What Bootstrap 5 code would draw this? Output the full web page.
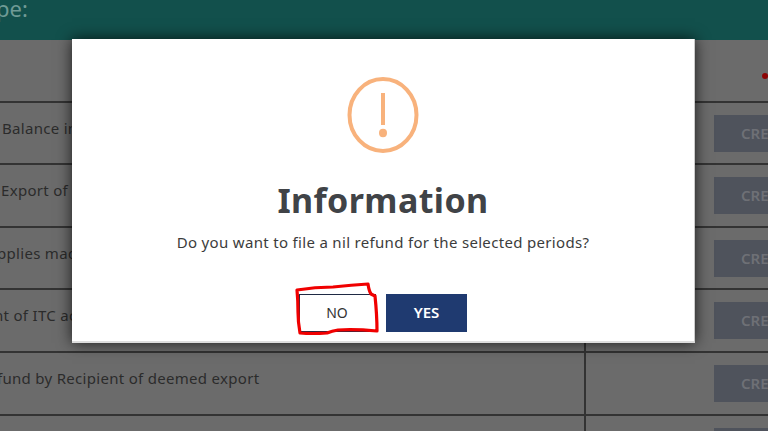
<!DOCTYPE html>
<html lang="en">
<head>
  <meta charset="UTF-8">
  <meta name="viewport" content="width=device-width, initial-scale=1">
  <title>Nil refund</title>
  <link href="https://cdn.jsdelivr.net/npm/bootstrap@5.3.0/dist/css/bootstrap.min.css" rel="stylesheet">
  <style>
    html, body { height: 432px; overflow: hidden; background: #fff; }
    body { font-family: "Noto Sans", "DejaVu Sans", sans-serif; color: #333; }
    /* page behind the dialog, already in its dimmed colours */
    .page-wrap { height: 431px; overflow: hidden; background: #6b6b6b; }
    .top-band { height: 40px; background: #12504c; color: #6f9a95; font-size: 22px; line-height: 17px; overflow: hidden; white-space: nowrap; }
    .type-row { height: 62.6px; border-bottom: 2px solid #333; }
    .type-name { width: 584px; flex: none; font-size: 15px; letter-spacing: .3px; line-height: 20px; padding: 15px 0 0 2px; overflow: hidden; white-space: nowrap; color: #2b2b2b; }
    .type-action { flex: 1; border-left: 2px solid #333; padding: 12px 0 0 128px; overflow: hidden; white-space: nowrap; }
    .head-action { border-left: 0; padding: 0; text-align: right; }
    .req-dot { display: inline-block; width: 6px; height: 6px; border-radius: 50%; background: #8c0505; margin-top: 33px; vertical-align: top; }
    .create-text { display: block; width: 110px; height: 37px; line-height: 37px; background: #4f535c; color: #6e7076; font-size: 15px; font-weight: 600; padding-left: 27px; }
    .shift-a { margin-left: -1px; }
    .shift-b { margin-left: -5px; }
    .shift-d { margin-left: -8px; }
    .shift-c { margin-left: -27px; }
    .info-dialog { position: absolute; left: 72px; top: 39px; width: 623px; height: 304px; background: #fff; box-shadow: 0 0 14px rgba(0, 0, 0, .75); border-right: 1px solid #ccc; border-bottom: 2px solid #ddd; }
    .info-icon { margin-top: 37px; width: 72px; height: 78px; flex: none; }
    .info-title { font-size: 34px; font-weight: 700; color: #404347; margin: 24px 0 0; line-height: 44px; letter-spacing: .4px; }
    .info-text { font-size: 15px; color: #3c3c3c; margin: 11px 0 0; line-height: 18px; letter-spacing: .32px; }
    .info-actions { margin-top: 43px; gap: 10px; }
    .btn-no, .btn-yes { height: 38px; border-radius: 0; padding: 0 0 2px; }
    .btn-no { width: 77px; font-size: 14px; padding-right: 2px; background: #fff; color: #333; border: 0; border-top: 1px solid #1f2a44; border-left: 1px solid #1f2a44; border-bottom: 1px solid #1f2a44; }
    .btn-yes { width: 81px; font-size: 15px; background: #1f3a70; color: #fff; border: 1px solid #1f3a70; font-weight: 600; }
    .scribble { position: absolute; left: 0; top: 0; pointer-events: none; }
  </style>
</head>
<body>
  <div class="page-wrap">
    <div class="top-band"><span class="d-inline-block shift-c">Type:</span></div>
    <div class="type-row d-flex">
      <div class="type-name"></div>
      <div class="type-action head-action"><span class="req-dot"></span></div>
    </div>
    <div class="type-row d-flex">
      <div class="type-name">Balance in Electronic Cash Ledger</div>
      <div class="type-action"><span class="create-text">CREATE</span></div>
    </div>
    <div class="type-row d-flex">
      <div class="type-name"><span class="shift-a d-inline-block">Export of Services with Payment of Tax</span></div>
      <div class="type-action"><span class="create-text">CREATE</span></div>
    </div>
    <div class="type-row d-flex">
      <div class="type-name"><span class="shift-b d-inline-block">pplies made to SEZ Unit</span></div>
      <div class="type-action"><span class="create-text">CREATE</span></div>
    </div>
    <div class="type-row d-flex">
      <div class="type-name"><span class="shift-d d-inline-block">nt of ITC accumulated</span></div>
      <div class="type-action"><span class="create-text">CREATE</span></div>
    </div>
    <div class="type-row d-flex">
      <div class="type-name"><span class="shift-b d-inline-block">fund by Recipient of deemed export</span></div>
      <div class="type-action"><span class="create-text">CREATE</span></div>
    </div>
    <div class="type-row d-flex">
      <div class="type-name"></div>
      <div class="type-action"><span class="create-text">CREATE</span></div>
    </div>
  </div>

  <div class="info-dialog d-flex flex-column align-items-center text-center">
    <svg class="info-icon" viewBox="0 0 72 78" fill="none">
      <ellipse cx="36" cy="39" rx="33.5" ry="36" stroke="#f8b27c" stroke-width="4"/>
      <rect x="34" y="17" width="4" height="32" fill="#f8b27c"/>
      <ellipse cx="36" cy="57" rx="4" ry="4.2" fill="#f8b27c"/>
    </svg>
    <h2 class="info-title">Information</h2>
    <p class="info-text">Do you want to file a nil refund for the selected periods?</p>
    <div class="info-actions d-flex">
      <button class="btn btn-no">NO</button>
      <button class="btn btn-yes">YES</button>
    </div>
  </div>

  <svg class="scribble" width="768" height="432" fill="none">
    <path d="M297 290 Q315 287 333 287 Q352 285 368 284 Q369 291 371 294 L375 296 Q377 315 377 331 Q355 329 338 330 Q332 331 327 333 Q312 334 300 333 Q298 322 298 312 Q298 300 297 290 Z" stroke="#f00000" stroke-width="3.2" stroke-linejoin="round"/>
  </svg>
</body>
</html>
